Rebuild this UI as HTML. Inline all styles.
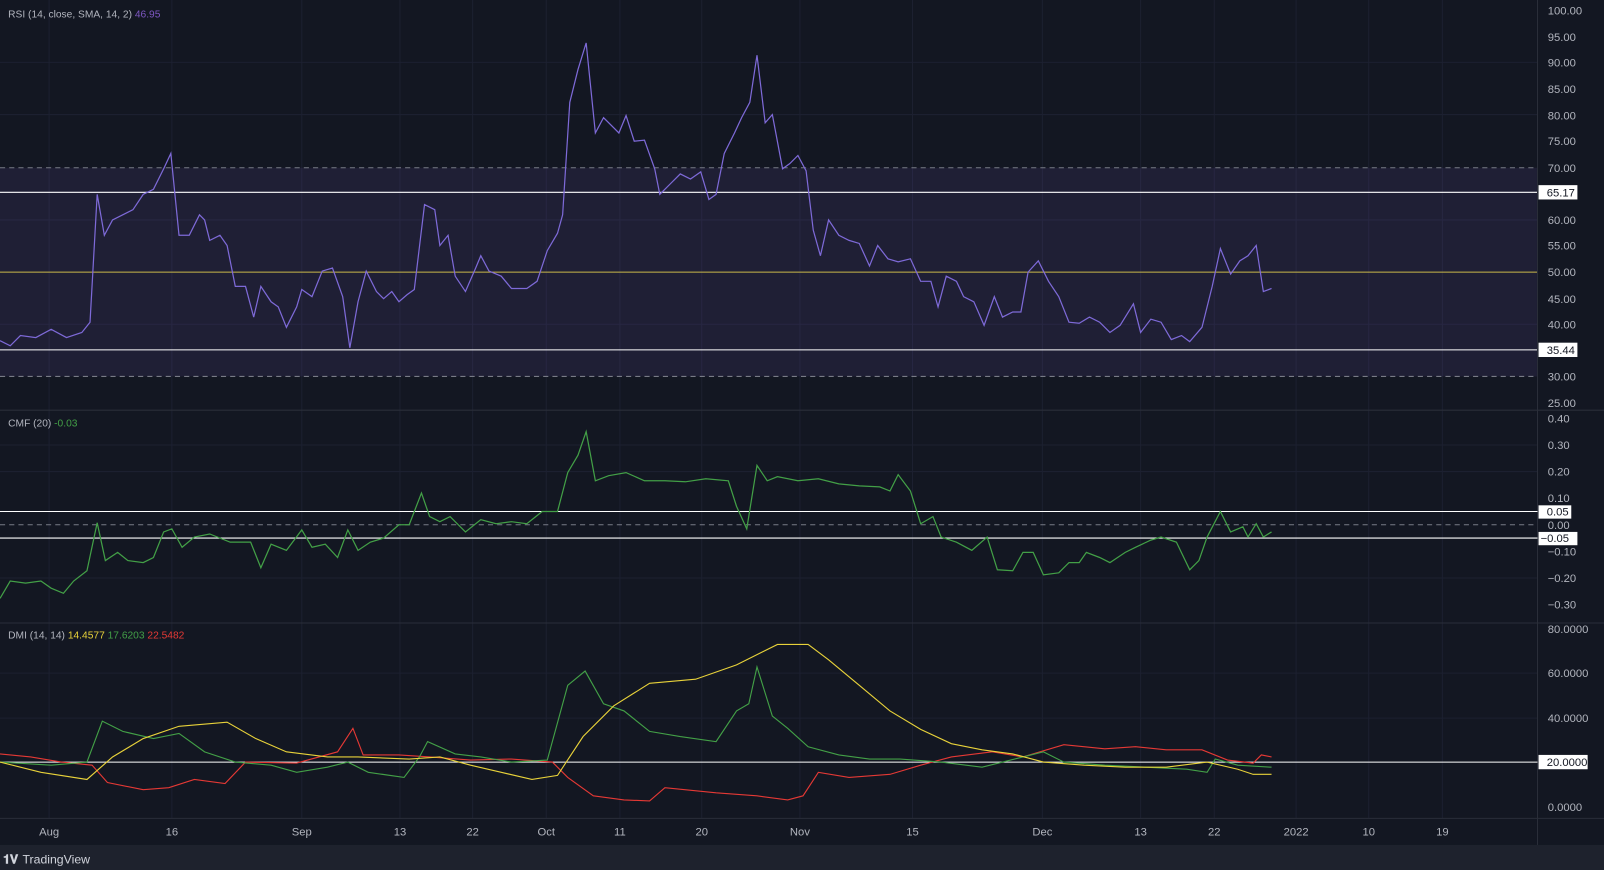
<!DOCTYPE html><html><head><style>
body{margin:0;background:#131722;width:1604px;height:870px;overflow:hidden;font-family:"Liberation Sans",sans-serif}
svg{display:block}
svg text{font-family:"Liberation Sans",sans-serif}
</style></head><body>
<svg width="1604" height="870" viewBox="0 0 1568 850.5" preserveAspectRatio="none" xmlns="http://www.w3.org/2000/svg">
<rect width="1568" height="851" fill="#131722"/>
<g stroke="#1c2030" stroke-width="1">
<line x1="48" y1="0" x2="48" y2="800"/><line x1="168" y1="0" x2="168" y2="800"/><line x1="295" y1="0" x2="295" y2="800"/><line x1="391" y1="0" x2="391" y2="800"/><line x1="462" y1="0" x2="462" y2="800"/><line x1="534" y1="0" x2="534" y2="800"/><line x1="606" y1="0" x2="606" y2="800"/><line x1="686" y1="0" x2="686" y2="800"/><line x1="782" y1="0" x2="782" y2="800"/><line x1="892" y1="0" x2="892" y2="800"/><line x1="1019" y1="0" x2="1019" y2="800"/><line x1="1115" y1="0" x2="1115" y2="800"/><line x1="1187" y1="0" x2="1187" y2="800"/><line x1="1267" y1="0" x2="1267" y2="800"/><line x1="1338" y1="0" x2="1338" y2="800"/><line x1="1410" y1="0" x2="1410" y2="800"/>
<line x1="0" y1="61" x2="1503" y2="61"/><line x1="0" y1="112" x2="1503" y2="112"/><line x1="0" y1="215" x2="1503" y2="215"/><line x1="0" y1="317" x2="1503" y2="317"/>
<line x1="0" y1="435" x2="1503" y2="435"/><line x1="0" y1="461" x2="1503" y2="461"/><line x1="0" y1="565" x2="1503" y2="565"/>
<line x1="0" y1="658" x2="1503" y2="658"/><line x1="0" y1="702" x2="1503" y2="702"/>
</g>
<rect x="0" y="164" width="1503" height="204" fill="#7e57c2" fill-opacity="0.12"/>
<line x1="0" y1="164" x2="1503" y2="164" stroke="#787b86" stroke-dasharray="5,4"/>
<line x1="0" y1="368" x2="1503" y2="368" stroke="#787b86" stroke-dasharray="5,4"/>
<line x1="0" y1="266" x2="1503" y2="266" stroke="#c9b94a"/>
<line x1="0" y1="188" x2="1503" y2="188" stroke="#fff"/>
<line x1="0" y1="342" x2="1503" y2="342" stroke="#fff"/>
<g stroke="#2a2e39"><line x1="0" y1="401" x2="1568" y2="401"/><line x1="0" y1="609" x2="1568" y2="609"/><line x1="0" y1="800" x2="1568" y2="800"/><line x1="1503" y1="0" x2="1503" y2="826"/></g>
<polyline fill="none" stroke="#7e6ad8" stroke-width="1.2" points="0,333 10,338 20,328 35,330 50,322 65,330 80,325 88,315 95,190 102,230 110,215 120,210 130,205 140,190 150,185 160,165 167,150 175,230 185,230 195,210 200,215 205,235 215,230 222,240 230,280 240,280 248,310 255,280 265,295 272,300 280,320 290,300 295,283 305,290 315,265 325,262 335,290 342,340 350,295 358,265 368,285 375,292 383,285 390,295 398,288 405,283 415,200 425,205 430,240 438,230 445,270 455,285 465,262 470,250 478,265 490,270 500,282 515,282 525,275 535,245 545,228 550,210 557,100 565,68 573,42 582,130 590,115 600,125 605,130 612,113 620,138 630,137 640,165 645,190 655,180 665,170 675,175 685,168 693,195 700,190 708,150 718,130 725,115 733,100 740,54 748,120 755,112 765,165 772,160 780,152 788,167 795,225 802,250 810,215 820,230 830,235 840,238 850,260 858,240 868,253 878,256 890,253 900,275 910,275 917,300 925,270 935,275 942,290 952,295 962,318 972,290 980,310 990,305 998,305 1005,266 1015,255 1025,275 1035,290 1045,315 1055,316 1065,310 1075,315 1085,325 1095,318 1108,297 1115,325 1125,312 1135,315 1145,332 1155,328 1163,334 1175,320 1185,280 1193,243 1203,268 1212,255 1220,250 1228,240 1235,285 1243,282"/>
<line x1="0" y1="513" x2="1503" y2="513" stroke="#787b86" stroke-dasharray="5,4"/>
<line x1="0" y1="500" x2="1503" y2="500" stroke="#fff"/>
<line x1="0" y1="526" x2="1503" y2="526" stroke="#fff"/>
<polyline fill="none" stroke="#43a047" stroke-width="1.2" points="0,585 10,568 25,570 40,568 50,575 62,580 72,568 85,558 95,511 103,548 115,540 125,548 140,550 150,545 160,520 168,517 178,535 190,525 205,522 225,530 245,530 255,555 265,532 280,538 295,518 305,535 318,532 330,545 340,518 350,538 362,530 375,526 390,513 400,513 412,482 420,505 430,510 440,505 455,520 470,508 485,512 500,510 515,512 530,500 545,500 555,462 565,445 573,422 582,470 595,465 612,462 630,470 650,470 670,471 690,468 712,470 720,495 730,517 740,455 750,470 760,466 780,470 800,468 820,473 840,475 860,476 870,480 878,464 890,480 900,512 912,505 920,525 935,530 950,538 965,525 975,557 990,558 1000,540 1010,540 1020,562 1035,560 1045,550 1055,550 1062,540 1075,545 1085,550 1100,540 1110,535 1125,528 1135,525 1150,530 1163,557 1172,548 1180,525 1193,500 1203,520 1215,515 1220,525 1228,512 1235,525 1243,520"/>
<line x1="0" y1="745" x2="1503" y2="745" stroke="#fff"/>
<polyline fill="none" stroke="#e53935" stroke-width="1.1" points="0,737 30,740 60,745 90,748 105,765 140,772 165,770 190,762 220,766 240,745 290,746 330,735 345,712 355,738 390,738 420,740 460,743 500,742 540,745 555,760 580,778 610,782 635,783 650,770 700,775 740,778 770,782 785,778 800,755 830,760 870,757 900,748 930,740 970,735 1000,740 1040,728 1080,732 1110,730 1140,733 1175,733 1200,743 1225,746 1233,738 1243,740"/>
<polyline fill="none" stroke="#43a047" stroke-width="1.1" points="0,745 50,748 85,745 100,705 120,715 150,722 175,717 200,735 230,745 265,748 290,755 320,750 340,745 360,755 395,760 410,740 418,725 445,737 470,740 500,745 535,743 555,670 572,656 590,688 610,695 635,715 665,720 700,725 720,695 732,688 740,652 755,700 770,712 790,730 820,738 850,742 880,742 920,745 960,750 1000,740 1020,735 1040,745 1080,748 1120,750 1160,752 1180,755 1188,742 1210,748 1243,750"/>
<polyline fill="none" stroke="#e8d23a" stroke-width="1.1" points="0,745 40,755 85,762 110,740 140,722 175,710 222,706 250,722 280,735 320,740 350,740 400,742 430,740 460,748 490,755 520,762 545,758 570,720 600,690 635,668 680,664 720,650 760,630 790,630 810,645 840,670 870,695 900,713 930,727 960,733 990,737 1020,745 1060,748 1100,750 1140,750 1180,745 1210,752 1225,757 1243,757"/>
<g font-size="10" fill="#b2b5be">
<text x="8" y="17">RSI (14, close, SMA, 14, 2) <tspan fill="#7e57c2">46.95</tspan></text>
<text x="8" y="417">CMF (20) <tspan fill="#43a047">-0.03</tspan></text>
<text x="8" y="624">DMI (14, 14) <tspan fill="#e8d23a">14.4577</tspan> <tspan fill="#43a047">17.6203</tspan> <tspan fill="#e53935">22.5482</tspan></text>
</g>
<g font-size="11" fill="#b2b5be">
<text x="1513" y="14">100.00</text><text x="1513" y="40">95.00</text><text x="1513" y="65">90.00</text><text x="1513" y="91">85.00</text><text x="1513" y="117">80.00</text><text x="1513" y="142">75.00</text><text x="1513" y="168">70.00</text><text x="1513" y="219">60.00</text><text x="1513" y="244">55.00</text><text x="1513" y="270">50.00</text><text x="1513" y="296">45.00</text><text x="1513" y="321">40.00</text><text x="1513" y="372">30.00</text><text x="1513" y="398">25.00</text>
<text x="1513" y="413">0.40</text><text x="1513" y="439">0.30</text><text x="1513" y="465">0.20</text><text x="1513" y="491">0.10</text><text x="1513" y="517">0.00</text><text x="1513" y="543">−0.10</text><text x="1513" y="569">−0.20</text><text x="1513" y="595">−0.30</text>
<text x="1513" y="619">80.0000</text><text x="1513" y="662">60.0000</text><text x="1513" y="706">40.0000</text><text x="1513" y="793">0.0000</text>
</g>
<g font-size="11">
<rect x="1504" y="181" width="38" height="14" fill="#fff"/><text x="1512" y="192" fill="#131722">65.17</text>
<rect x="1504" y="335" width="38" height="14" fill="#fff"/><text x="1512" y="346" fill="#131722">35.44</text>
<rect x="1504" y="494" width="32" height="13" fill="#fff"/><text x="1512" y="504" fill="#131722">0.05</text>
<rect x="1504" y="520" width="38" height="13" fill="#fff"/><text x="1506" y="530" fill="#131722">−0.05</text>
<rect x="1504" y="738" width="48" height="14" fill="#fff"/><text x="1512" y="749" fill="#131722">20.0000</text>
</g>
<g font-size="11" fill="#b2b5be" text-anchor="middle">
<text x="48" y="817">Aug</text><text x="168" y="817">16</text><text x="295" y="817">Sep</text><text x="391" y="817">13</text><text x="462" y="817">22</text><text x="534" y="817">Oct</text><text x="606" y="817">11</text><text x="686" y="817">20</text><text x="782" y="817">Nov</text><text x="892" y="817">15</text><text x="1019" y="817">Dec</text><text x="1115" y="817">13</text><text x="1187" y="817">22</text><text x="1267" y="817">2022</text><text x="1338" y="817">10</text><text x="1410" y="817">19</text>
</g>
<rect x="0" y="826" width="1568" height="25" fill="#1e222d"/>
<text x="3" y="844" font-size="12" font-weight="bold" fill="#d1d4dc">𝟏𝐕</text>
<text x="22" y="844" font-size="12" fill="#d1d4dc">TradingView</text>
</svg>
</body></html>
